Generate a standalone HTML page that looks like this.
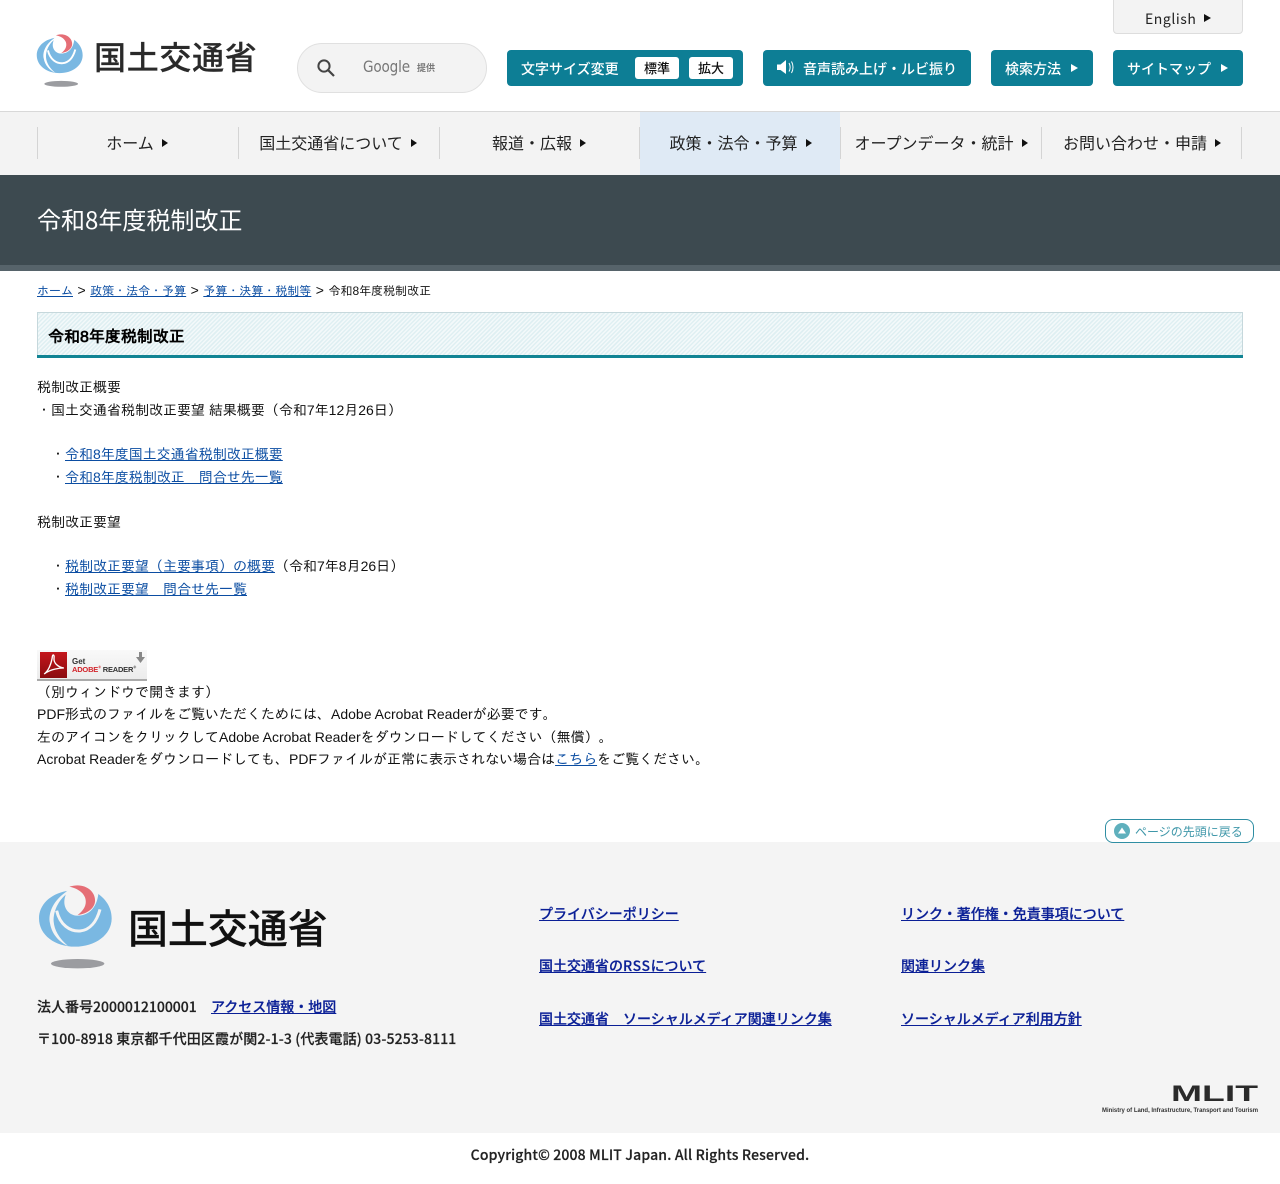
<!DOCTYPE html>
<html lang="ja">
<head>
<meta charset="utf-8">
<title>令和8年度税制改正</title>
<style>
html,body{margin:0;padding:0;background:#fff}
body{position:relative;width:1280px;height:1184px;overflow:hidden;font-family:"Liberation Sans","IPAGothic","Noto Sans CJK JP",sans-serif;font-size:14px;color:#111}
.a{position:absolute;white-space:nowrap}
.n{font-family:"Noto Sans CJK JP",sans-serif}
a{color:#0b4da2;text-decoration:underline}
.btn{position:absolute;top:50px;height:36px;background:#0d7e95;border-radius:4px;color:#fff;font:500 14px/38px "Noto Sans CJK JP",sans-serif;white-space:nowrap}
.tri{display:inline-block;width:0;height:0;border-left:7px solid currentColor;border-top:4.5px solid transparent;border-bottom:4.5px solid transparent}
.wb{position:absolute;top:7px;height:22px;width:44px;background:#fff;border-radius:3px;color:#111;text-align:center;font-size:13px;line-height:22px}
.nav{position:absolute;top:127px;width:201px;height:32px;border-left:1px solid #d4d4d4;text-align:center;font:400 16px/30px "Noto Sans CJK JP",sans-serif;color:#222;white-space:nowrap}
.nav .tri{border-left-width:6px;border-top-width:4px;border-bottom-width:4px;margin-left:8px;margin-right:3px;color:#111;vertical-align:2px}
.f{position:absolute;white-space:nowrap;font:500 14px/20px "Noto Sans CJK JP",sans-serif;color:#222;-webkit-text-stroke:.2px currentColor}
.f a{color:#0a1f96}
.sep{font-size:14px;word-spacing:.6px}
</style>
</head>
<body>
<svg width="0" height="0" style="position:absolute">
<symbol id="mark" viewBox="0 0 270 285">
<path fill="#7ab8e2" d="M110 33C60 42 27 75 27 115C27 165 75 200 135 200C195 200 245 165 245 115C245 85 230 60 205 42L150 20Z"/>
<path fill="var(--bg)" d="M112 33C70 60 53 100 60 130C66 165 90 187 114 198C87 175 73 150 71 125C69 95 85 60 112 40Z"/>
<path fill="none" stroke="var(--bg)" stroke-width="9" d="M80 92C90 135 120 155 150 153C180 150 200 125 210 88"/>
<path fill="var(--bg)" d="M110 33L104 55C98 85 118 108 145 107C175 106 200 85 205 42L160 5Z"/>
<path fill="#e56e76" d="M118 20C165 5 198 35 195 65C193 85 172 102 143 105C163 90 172 72 165 52C158 35 140 25 118 20Z"/>
<ellipse cx="143" cy="251" rx="80" ry="14" fill="#9b9ca0"/>
</symbol>
</svg>

<!-- header -->
<svg class="a" style="left:31px;top:31px;--bg:#fff" width="57" height="60"><use href="#mark"/></svg>
<div class="a n" style="left:94px;top:32px;font-size:32px;line-height:48px;font-weight:500;color:#2a2a2a;letter-spacing:.7px;-webkit-text-stroke:.2px #2a2a2a">国土交通省</div>

<div class="a" style="left:297px;top:43px;width:188px;height:48px;background:#f3f3f3;border:1px solid #e0e0e0;border-radius:25px"></div>
<svg class="a" style="left:316px;top:58px" width="20" height="20" viewBox="0 0 20 20"><circle cx="8" cy="8" r="5.6" fill="none" stroke="#444" stroke-width="2"/><path d="M12.2 12.2L18 18" stroke="#444" stroke-width="2.2"/></svg>
<div class="a" style="left:363px;top:57px;font-size:16px;line-height:20px;color:#777;letter-spacing:-.2px;font-family:'DejaVu Sans',sans-serif;transform:scaleX(.85);transform-origin:0 0">Google</div>
<div class="a n" style="left:417px;top:61px;font-size:9px;line-height:13px;font-weight:700;color:#777">提供</div>

<div class="a" style="left:1113px;top:-1px;width:128px;height:33px;background:#f3f3f3;border:1px solid #ddd;border-radius:0 0 4px 4px"></div>
<div class="a n" style="left:1145px;top:9px;font-size:14px;line-height:21px;color:#222;letter-spacing:.55px">English</div>
<span class="a tri" style="left:1204px;top:14px;color:#111"></span>

<div class="btn" style="left:507px;width:236px"><span class="a" style="left:14px">文字サイズ変更</span><span class="wb" style="left:128px">標準</span><span class="wb" style="left:182px">拡大</span></div>
<div class="btn" style="left:763px;width:208px"><span class="a" style="left:40px">音声読み上げ・ルビ振り</span>
<svg class="a" style="left:13px;top:9px" width="20" height="17" viewBox="0 0 20 17"><path d="M1 5.500h3.500L10 1v14L4.500 11H1z" fill="#fff"/><path d="M13 4c1.500 2.500 1.500 6 0 8.500M15.500 2.500c2 3.500 2 8 0 11.500" fill="none" stroke="#fff" stroke-width="1"/></svg></div>
<div class="btn" style="left:991px;width:102px"><span class="a" style="left:14px">検索方法</span><span class="tri a" style="left:80px;top:14px"></span></div>
<div class="btn" style="left:1113px;width:130px"><span class="a" style="left:14px">サイトマップ</span><span class="tri a" style="left:108px;top:14px"></span></div>

<!-- nav -->
<div class="a" style="left:0;top:111px;width:1280px;height:63px;background:#f3f3f3;border-top:1px solid #d8d8d8"></div>
<div class="a" style="left:640px;top:112px;width:200px;height:63px;background:#dfeaf5"></div>
<div class="nav" style="left:37px">ホーム<span class="tri"></span></div>
<div class="nav" style="left:238px">国土交通省について<span class="tri"></span></div>
<div class="nav" style="left:439px">報道・広報<span class="tri"></span></div>
<div class="nav" style="left:639px;width:196px;padding-left:4px">政策・法令・予算<span class="tri"></span></div>
<div class="nav" style="left:840px;width:199px;padding-left:2px">オープンデータ・統計<span class="tri"></span></div>
<div class="nav" style="left:1041px;width:195px;padding-left:4px;border-right:1px solid #d4d4d4">お問い合わせ・申請<span class="tri"></span></div>

<!-- title -->
<div class="a" style="left:0;top:175px;width:1280px;height:90px;background:#3d4a50"></div>
<div class="a" style="left:0;top:265px;width:1280px;height:6px;background:#56636a"></div>
<div class="a n" style="left:37px;top:201px;font-size:24px;line-height:36px;color:#fff">令和8年度税制改正</div>

<!-- breadcrumb -->
<div class="a" style="left:37px;top:282px;font-size:12px;line-height:16px"><a href="#">ホーム</a><span class="sep"> &gt; </span><a href="#">政策・法令・予算</a><span class="sep"> &gt; </span><a href="#">予算・決算・税制等</a><span class="sep"> &gt; </span>令和8年度税制改正</div>

<!-- heading -->
<div class="a" style="left:37px;top:312px;width:1204px;height:42px;border:1px solid #c6d8dc;border-bottom:0;background:repeating-linear-gradient(-45deg,#dfeff2 0 1.500px,#f3f9fa 1.500px 3px)"></div>
<div class="a" style="left:37px;top:355px;width:1206px;height:3px;background:#118494"></div>
<div class="a" style="left:48px;top:326px;font-size:16px;line-height:24px;color:#000;-webkit-text-stroke:.7px #000">令和8年度税制改正</div>

<!-- content -->
<div class="a" style="left:37px;top:376.200px;line-height:22.4px">税制改正概要<br>・国土交通省税制改正要望 結果概要（令和7年12月26日）<br><br>
<span style="margin-left:14px"></span>・<a href="#">令和8年度国土交通省税制改正概要</a><br>
<span style="margin-left:14px"></span>・<a href="#">令和8年度税制改正　問合せ先一覧</a><br><br>税制改正要望<br><br>
<span style="margin-left:14px"></span>・<a href="#">税制改正要望（主要事項）の概要</a>（令和7年8月26日）<br>
<span style="margin-left:14px"></span>・<a href="#">税制改正要望　問合せ先一覧</a></div>

<!-- adobe badge -->
<div class="a" style="left:37px;top:650px;width:110px;height:31px;background:linear-gradient(#f9f9f9,#ececec);border-bottom:2px solid #aaa;box-sizing:border-box"></div>
<svg class="a" style="left:40px;top:652px" width="27" height="26" viewBox="0 0 26 26" preserveAspectRatio="none"><defs><linearGradient id="ar" x1="0" y1="0" x2="0" y2="1"><stop offset="0" stop-color="#c4161c"/><stop offset="1" stop-color="#8a0c10"/></linearGradient></defs><rect width="26" height="26" fill="url(#ar)"/><path d="M4 22C8 19 11 12 12 4C12.500 2 14 3 13.500 6C13 11 17 15 23 16C19 16 10 17 4 22Z" fill="none" stroke="#fff" stroke-width="1.300"/></svg>
<div class="a" style="left:72px;top:657px;font-size:8px;line-height:9px;font-weight:700;color:#333">Get</div>
<div class="a" style="left:72px;top:665px;font-size:7.500px;line-height:9px;font-weight:700;color:#333;letter-spacing:-.2px"><span style="color:#d2232a">ADOBE</span><sup style="font-size:4px;line-height:0;color:#d2232a">®</sup> READER<sup style="font-size:4px;line-height:0">®</sup></div>
<svg class="a" style="left:136px;top:652px" width="9" height="11" viewBox="0 0 9 11"><path d="M3 0h3v5h3L4.500 11 0 5h3z" fill="#888"/></svg>

<div class="a" style="left:37px;top:681.300px;line-height:22.4px">（別ウィンドウで開きます）</div>
<div class="a" style="left:37px;top:703px;line-height:22.4px">PDF形式のファイルをご覧いただくためには、Adobe Acrobat Readerが必要です。</div>
<div class="a" style="left:37px;top:726px;line-height:22.4px">左のアイコンをクリックしてAdobe Acrobat Readerをダウンロードしてください（無償）。</div>
<div class="a" style="left:37px;top:748px;line-height:22.4px">Acrobat Readerをダウンロードしても、PDFファイルが正常に表示されない場合は<a href="#">こちら</a>をご覧ください。</div>

<!-- footer -->
<div class="a" style="left:0;top:842px;width:1280px;height:291px;background:#f4f4f4"></div>
<div class="a" style="left:1105px;top:819px;width:147px;height:22px;background:#fff;border:1px solid #2f8ea3;border-radius:8px"></div>
<svg class="a" style="left:1114px;top:823px" width="16" height="16" viewBox="0 0 16 16"><circle cx="8" cy="8" r="8" fill="#5fb0bd"/><path d="M8 4.500L12 10.500H4z" fill="#fff"/></svg>
<div class="a n" style="left:1135px;top:823px;font-size:12px;line-height:18px;color:#3f97a9">ページの先頭に戻る</div>

<svg class="a" style="left:30px;top:880px;--bg:#f4f4f4" width="90" height="95"><use href="#mark"/></svg>
<div class="a n" style="left:128px;top:896px;font-size:40px;line-height:60px;font-weight:500;color:#111;letter-spacing:-.1px;-webkit-text-stroke:.2px #111">国土交通省</div>

<div class="f" style="left:37px;top:997px">法人番号2000012100001</div>
<div class="f" style="left:211px;top:997px"><a href="#">アクセス情報・地図</a></div>
<div class="f" style="left:37px;top:1029px;letter-spacing:.12px">〒100-8918 東京都千代田区霞が関2-1-3 (代表電話) 03-5253-8111</div>

<div class="f" style="left:539px;top:904px"><a href="#">プライバシーポリシー</a></div>
<div class="f" style="left:901px;top:904px"><a href="#">リンク・著作権・免責事項について</a></div>
<div class="f" style="left:539px;top:956px"><a href="#">国土交通省の<span style="letter-spacing:.6px">RSS</span>について</a></div>
<div class="f" style="left:901px;top:956px"><a href="#">関連リンク集</a></div>
<div class="f" style="left:539px;top:1009px"><a href="#">国土交通省　ソーシャルメディア関連リンク集</a></div>
<div class="f" style="left:901px;top:1009px"><a href="#">ソーシャルメディア利用方針</a></div>

<svg class="a" style="left:1100px;top:1080px" width="160" height="36" viewBox="0 0 160 36">
<text x="71" y="21" font-family="Liberation Sans" font-weight="700" font-size="22" fill="#2a2a2a" textLength="87" lengthAdjust="spacingAndGlyphs">MLIT</text>
<text x="2" y="32" font-family="Liberation Sans" font-weight="700" font-size="6.500" fill="#333" textLength="156" lengthAdjust="spacingAndGlyphs">Ministry of Land, Infrastructure, Transport and Tourism</text>
</svg>

<div class="a n" style="left:0;top:1145px;width:1280px;text-align:center;font-size:14px;line-height:21px;font-weight:500;color:#222;letter-spacing:.15px;-webkit-text-stroke:.2px #222">Copyright© 2008 MLIT Japan. All Rights Reserved.</div>
</body>
</html>
